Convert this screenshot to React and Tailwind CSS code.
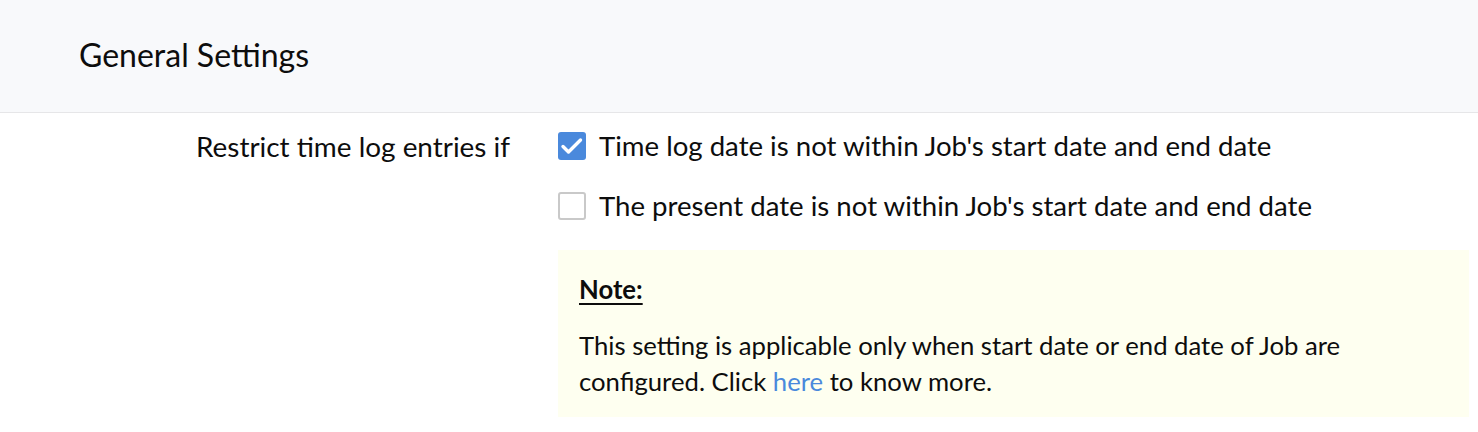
import React from "react";

function Check({ checked }) {
  if (checked) {
    return (
      <span className="flex h-[28px] w-[28px] shrink-0 items-center justify-center rounded-[3px] bg-[#4a89dc]">
        <svg width="28" height="28" viewBox="0 0 28 28" fill="none">
          <path d="M5 14.5l5.5 5.5L22.5 8" stroke="white" strokeWidth="3.4" strokeLinecap="round" strokeLinejoin="round" />
        </svg>
      </span>
    );
  }
  return <span className="block h-[28px] w-[28px] shrink-0 rounded-[3px] border-[2.5px] border-[#c9c9c9] bg-white" />;
}

export default function App() {
  return (
    <div className="w-[1478px] h-[432px] bg-white text-[#0d0d0d] overflow-hidden" style={{ fontFamily: "Lato, 'Open Sans', sans-serif" }}>
      <div className="flex h-[113px] items-center border-b border-[#e6e6e8] bg-[#f8f9fb] pl-[79px] pb-[3px]">
        <h1 className="text-[32px] leading-none">General Settings</h1>
      </div>
      <div className="flex gap-[48px] pt-[15px] text-[27.6px] leading-[36px]">
        <div className="w-[510px] text-right text-[27.9px]">Restrict time log entries if</div>
        <div className="flex flex-1 flex-col pr-[9px]">
          <label className="flex items-center gap-[13px]">
            <Check checked />
            <span>Time log date is not within Job's start date and end date</span>
          </label>
          <label className="mt-[24px] flex items-center gap-[13px]">
            <Check />
            <span>The present date is not within Job's start date and end date</span>
          </label>
          <div className="mt-[26px] bg-[#fefff0] px-[21px] pt-[21px] pb-[18px] text-[25.7px]">
            <div className="font-bold underline underline-offset-[4px]">Note:</div>
            <p className="mt-[20px]">
              This setting is applicable only when start date or end date of Job are
              <br />
              configured. Click <a className="text-[#4a89dc]">here</a> to know more.
            </p>
          </div>
        </div>
      </div>
    </div>
  );
}
